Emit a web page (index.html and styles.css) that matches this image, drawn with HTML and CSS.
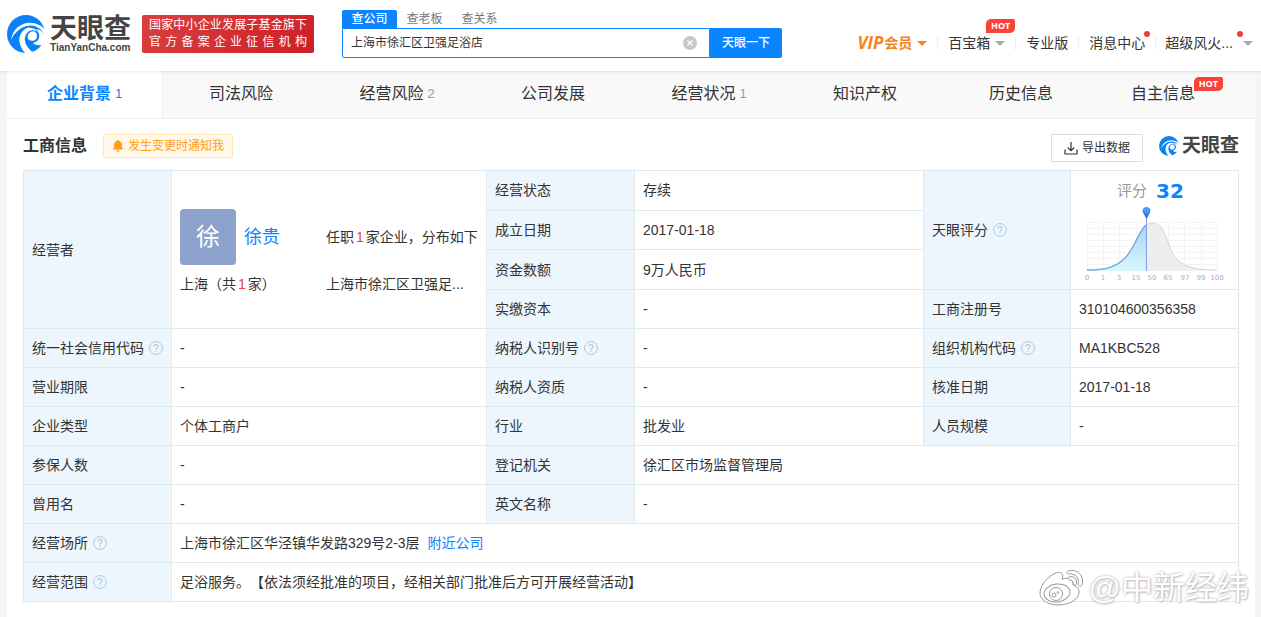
FILE: index.html
```html
<!DOCTYPE html>
<html lang="zh-CN">
<head>
<meta charset="utf-8">
<title>天眼查</title>
<link rel="stylesheet" href="styles.css">
</head>
<body>
<svg class="defs" aria-hidden="true">
  <symbol id="eye" viewBox="0 0 38 38">
    <circle cx="19" cy="19" r="19" fill="#0a82f5"/>
    <path d="M4 25C6 11 20 4 32 10C35 11 37 13 39 17V28C35 31 29 31 26 28C31 27 33 23 32 19C30 11 20 9 13 14C9 17 6 20 4 25z" fill="#fff"/>
    <path d="M20 13C10 18 10 30 19 39L27 38C19 33 15 24 20 18C22 15 27 14 30 17C28 12 24 11 20 13z" fill="#fff"/>
    <path d="M21 20C23 15 30 15 30 21C30 25 26 27 22 25C21 24 20 22 21 20z" fill="#fff"/>
    <path d="M14 14C22 8 32 10 37 19C34 15 31 14 28 14C23 12 18 12 14 14z" fill="#0a82f5"/>
  </symbol>
  <symbol id="help" viewBox="0 0 14 14">
    <circle cx="7" cy="7" r="6.4" fill="none" stroke="#a9c8e2"/>
    <path d="M5 5.6c0-2.6 4-2.6 4 0C9 7 7 7 7 8.7M7 9.8v1.1" fill="none" stroke="#a9c8e2" stroke-width="1.1"/>
  </symbol>
</svg>

<header class="topbar">
  <a class="logo" href="#">
    <svg class="logo-mark"><use href="#eye"/></svg>
    <span class="logo-words"><span class="logo-cn">天眼查</span><span class="logo-en">TianYanCha.com</span></span>
  </a>
  <div class="official"><span>国家中小企业发展子基金旗下</span><span class="spread">官方备案企业征信机构</span></div>
  <form class="search">
    <div class="search-tabs">
      <button type="button" class="search-tab on">查公司</button>
      <button type="button" class="search-tab">查老板</button>
      <button type="button" class="search-tab">查关系</button>
    </div>
    <div class="search-row">
      <div class="search-box">
        <input type="text" aria-label="搜索公司" value="上海市徐汇区卫强足浴店">
        <button type="button" class="clear" aria-label="清除"><svg viewBox="0 0 14 14"><circle cx="7" cy="7" r="7" fill="#c8c8c8"/><path d="M4.5 4.5l5 5m0-5l-5 5" stroke="#fff" stroke-width="1.2"/></svg></button>
      </div>
      <button type="submit" class="go">天眼一下</button>
    </div>
  </form>
  <nav class="user-nav">
    <a class="vip" href="#"><i>VIP</i>会员<span class="caret"></span></a>
    <a href="#">百宝箱<span class="caret"></span><b class="hot">HOT</b></a>
    <a href="#">专业版</a>
    <a href="#">消息中心<span class="dot"></span></a>
    <a class="account" href="#">超级风火...<span class="caret"></span><span class="dot"></span></a>
  </nav>
</header>

<main class="page">
  <nav class="tabs">
    <a class="active" href="#">企业背景<small>1</small></a>
    <a href="#">司法风险</a>
    <a href="#">经营风险<small>2</small></a>
    <a href="#">公司发展</a>
    <a href="#">经营状况<small>1</small></a>
    <a href="#">知识产权</a>
    <a href="#">历史信息</a>
    <a href="#"><span class="tab-label">自主信息<b class="hot">HOT</b></span></a>
  </nav>

  <section class="info">
    <div class="info-head">
      <h2>工商信息</h2>
      <button type="button" class="notify"><svg viewBox="0 0 12 12"><path d="M6 0c.7 0 1 .4 1 1 2 .5 3 2 3 4v2.500L11.500 9.500H.500L2 7.500V5c0-2 1-3.500 3-4 0-.6.300-1 1-1zM4.500 10.300h3c-.3 2-2.700 2-3 0z" fill="#ff9c1a"/></svg>发生变更时通知我</button>
      <button type="button" class="export"><svg viewBox="0 0 14 14" fill="none" stroke="#333" stroke-width="1.200"><path d="M7 1v8.500M3.800 6.500L7 9.700l3.200-3.200M1 8.500v4.500h12V8.500"/></svg>导出数据</button>
      <div class="brand"><svg><use href="#eye"/></svg>天眼查</div>
    </div>

    <table class="facts">
      <colgroup><col class="label-col"><col class="owner-col"><col class="label-col"><col><col class="label-col-narrow"><col class="score-col"></colgroup>
      <tr>
        <th rowspan="4">经营者</th>
        <td rowspan="4">
          <div class="owner">
            <div class="person"><span class="avatar">徐</span><a href="#">徐贵</a></div>
            <div>任职<em>1</em>家企业，分布如下</div>
            <div>上海（共<em>1</em>家）</div>
            <div>上海市徐汇区卫强足...</div>
          </div>
        </td>
        <th>经营状态</th><td>存续</td>
        <th rowspan="3">天眼评分<svg class="help"><use href="#help"/></svg></th>
        <td rowspan="3" class="score-cell">
          <div class="score">评分<strong>32</strong></div>
          <svg class="chart" viewBox="0 0 146 76" role="img" aria-label="评分分布">
            <defs>
              <linearGradient id="fill" x1="0" y1="0" x2="0" y2="1"><stop offset="0" stop-color="#a5d5fb"/><stop offset="1" stop-color="#d9f6fc"/></linearGradient>
              <linearGradient id="pin" x1="0" y1="0" x2="0" y2="1"><stop offset="0" stop-color="#2f9df5"/><stop offset="1" stop-color="#3a62e8"/></linearGradient>
            </defs>
            <path d="M8 16.500H138M8 22.500H138M8 28.500H138M8 34.500H138M8 40.500H138M8 46.500H138M8 52.500H138M8 58.500H138M8 64.500H138M8.500 16V65M24.500 16V65M40.500 16V65M57.500 16V65M73.500 16V65M89.500 16V65M105.500 16V65M122.500 16V65M138.500 16V65" stroke="#f4f4f6" fill="none"/>
            <path d="M67 20C69 17.500 71 17 74 17C87 17 88 41 96 51C103 60 114 64 138 64L67 65z" fill="#eee"/>
            <path d="M67 20C69 17.500 71 17 74 17C87 17 88 41 96 51C103 60 114 64 138 64" fill="none" stroke="#d6d6d6"/>
            <path d="M8 64C28 64 37 61 46 52C56 42 60 24 67 19V65H8z" fill="url(#fill)"/>
            <path d="M8 64C28 64 37 61 46 52C56 42 60 24 67 19" fill="none" stroke="#6ea3e4" stroke-width="1.300"/>
            <path d="M67.500 10V65" stroke="#7da2e8"/>
            <path d="M67.500 13L64 6.500C61.500-1 73.500-1 71 6.500z" fill="url(#pin)"/>
            <circle cx="67.500" cy="4.800" r="1.700" fill="none" stroke="#8ccbff" stroke-width=".7"/>
            <g class="axis"><text x="8" y="74">0</text><text x="24" y="74">1</text><text x="40" y="74">3</text><text x="57" y="74">15</text><text x="73" y="74">50</text><text x="89" y="74">65</text><text x="106" y="74">97</text><text x="122" y="74">99</text><text x="138" y="74">100</text></g>
          </svg>
        </td>
      </tr>
      <tr><th>成立日期</th><td>2017-01-18</td></tr>
      <tr><th>资金数额</th><td>9万人民币</td></tr>
      <tr><th>实缴资本</th><td>-</td><th>工商注册号</th><td>310104600356358</td></tr>
      <tr><th>统一社会信用代码<svg class="help"><use href="#help"/></svg></th><td>-</td><th>纳税人识别号<svg class="help"><use href="#help"/></svg></th><td>-</td><th>组织机构代码<svg class="help"><use href="#help"/></svg></th><td>MA1KBC528</td></tr>
      <tr><th>营业期限</th><td>-</td><th>纳税人资质</th><td>-</td><th>核准日期</th><td>2017-01-18</td></tr>
      <tr><th>企业类型</th><td>个体工商户</td><th>行业</th><td>批发业</td><th>人员规模</th><td>-</td></tr>
      <tr><th>参保人数</th><td>-</td><th>登记机关</th><td colspan="3">徐汇区市场监督管理局</td></tr>
      <tr><th>曾用名</th><td>-</td><th>英文名称</th><td colspan="3">-</td></tr>
      <tr><th>经营场所<svg class="help"><use href="#help"/></svg></th><td colspan="5">上海市徐汇区华泾镇华发路329号2-3层<a class="nearby" href="#">附近公司</a></td></tr>
      <tr><th>经营范围<svg class="help"><use href="#help"/></svg></th><td colspan="5">足浴服务。【依法须经批准的项目，经相关部门批准后方可开展经营活动】</td></tr>
    </table>
    <div class="watermark">
      <svg viewBox="0 0 46 38" fill="#fff" stroke="#999" stroke-width="1"><path d="M23 10c2-5-1-8-6-6C9 7 1 16 1 24c0 7 8 12 18 12 12 0 21-6 21-13 0-4-3-6-6-7 1-5-3-8-11-6z"/><ellipse cx="18" cy="24" rx="13" ry="9" transform="rotate(-7 18 24)"/><circle cx="17" cy="25" r="6.500"/><circle cx="15" cy="26" r="2"/><circle cx="19" cy="23.500" r=".8"/><path d="M29 2c9-3 17 5 14 14-1 2-4 1-4-1 2-6-3-11-9-10-2 0-3-2-1-3zM30 8c5-2 9 3 7 7-1 2-3 1-3-1 0-2-1-3-3-3s-3-2-1-3z"/></svg>
      <span>@中新经纬</span>
    </div>
  </section>
</main>
</body>
</html>
```
FILE: styles.css
```css
* { box-sizing: border-box; }
body {
  margin: 0;
  background: #f4f5f6;
  color: #333;
  font: 14px/20px "Liberation Sans", "Noto Sans CJK SC", sans-serif;
  text-spacing-trim: space-all;
}
a { color: inherit; text-decoration: none; }
button, input { font: inherit; color: inherit; border: 0; padding: 0; background: none; }
svg { display: block; }
.defs { position: absolute; width: 0; height: 0; }

.topbar {
  position: relative;
  display: flex;
  align-items: center;
  height: 71px;
  padding: 0 8px 3px 7px;
  background: #fff;
  box-shadow: 0 1px 3px rgba(0, 0, 0, .1);
}
.logo { display: flex; align-items: center; gap: 5px; width: 135px; color: #444; font-weight: 700; }
.logo-mark { width: 38px; height: 38px; }
.logo-words { display: flex; flex-direction: column; }
.logo-cn { font-size: 27px; line-height: 28px; }
.logo-en { font-size: 10px; line-height: 10px; }
.official {
  width: 172px;
  padding: 2px 7px;
  border-radius: 2px;
  background: linear-gradient(135deg, #da4040, #cd1f25);
  color: #fff;
  line-height: 17px;
  white-space: nowrap;
}
.official span { display: block; font-size: 12px; text-align-last: justify; }

.search { width: 440px; margin-left: 28px; font-size: 12px; }
.search-tabs { display: flex; }
.search-tab { width: 55px; height: 18px; line-height: 18px; color: #777; }
.search-tab.on { border-radius: 2px 2px 0 0; background: #0a84ff; color: #fff; font-weight: 500; }
.search-row { display: flex; height: 30px; }
.search-box { flex: 1; display: flex; align-items: center; padding: 0 12px 0 8px; border: 1px solid #0a84ff; border-radius: 0 0 0 2px; }
.search-box input { flex: 1; outline: 0; min-width: 0; }
.clear, .clear svg { width: 14px; height: 14px; }
.go { width: 72px; border-radius: 0 2px 2px 0; background: #0a84ff; color: #fff; font-weight: 500; }

.user-nav { display: flex; margin-left: auto; padding-top: 18px; white-space: nowrap; }
.user-nav a { position: relative; display: flex; align-items: center; padding: 0 10px 0 11px; }
.user-nav a + a::before { content: ""; position: absolute; left: 0; width: 1px; height: 14px; background: #eee; }
.user-nav .account { padding: 0 0 0 10px; }
.user-nav .vip { color: #f58220; font-weight: 700; }
.vip i { margin-right: 1px; font-family: "Open Sans", sans-serif; font-size: 17px; }
.caret { margin-left: 5px; border: 5px solid transparent; border-top-color: #aaa; border-bottom: 0; }
.vip .caret { border-top-color: #f58220; }
.account .caret { margin-left: 10px; }
.dot { position: absolute; top: -2px; right: 5px; width: 6px; height: 6px; border-radius: 3px; background: #f33b36; }
.account .dot { right: 10px; }
.hot {
  position: absolute;
  top: -14px;
  right: 0;
  padding: 0 5px;
  border-radius: 5px 2px 5px 0;
  background: #fa4238;
  color: #fff;
  font: 700 9px/14px "Open Sans", sans-serif;
}

.page { margin: 0 6px 0 7px; background: #fff; }
.tabs { display: grid; grid-template-columns: repeat(8, 1fr); border-bottom: 1px solid #eee; background: #f9f9f9; font-size: 16px; }
.tabs a { display: flex; align-items: center; justify-content: center; gap: 4px; height: 47px; padding-bottom: 2px; }
.tabs small { color: #999; font-size: 13px; }
.tabs .active { border-right: 1px solid #eee; background: #fff; color: #0a84ff; font-weight: 700; }
.tabs .active small { color: #0a84ff; font-weight: 400; }
.tab-label { position: relative; padding-right: 28px; }
.tab-label .hot { top: -7px; right: 0; }

.info { position: relative; padding: 15px 16px; }
.info-head { display: flex; height: 36px; align-items: flex-start; }
h2 { margin: 0 16px 0 0; font-size: 16px; line-height: 24px; }
.notify, .export { display: flex; align-items: center; justify-content: center; border: 1px solid #ffe6b8; border-radius: 2px; font-size: 12px; }
.notify { gap: 4px; width: 130px; height: 24px; background: #fff8e8; color: #ff9c1a; }
.notify svg { width: 12px; height: 12px; }
.export { gap: 4px; width: 92px; height: 28px; margin-left: auto; border-color: #ddd; }
.export svg { width: 14px; height: 14px; }
.brand { display: flex; align-items: center; gap: 3px; height: 24px; margin-left: 16px; color: #444; font-size: 19px; font-weight: 700; }
.brand svg { width: 20px; height: 20px; }

.facts { width: 100%; table-layout: fixed; border-collapse: collapse; }
.label-col { width: 148px; }
.label-col-narrow { width: 147px; }
.owner-col { width: 315px; }
.score-col { width: 168px; }
th, td { height: 39px; padding: 0 8px; border: 1px solid #dfe9f0; text-align: left; font-weight: 400; white-space: nowrap; }
th { background: #eef6fd; }
.help { display: inline-block; width: 14px; height: 14px; margin-left: 5px; vertical-align: -2px; }
.owner { display: grid; grid-template-columns: 146px 1fr; align-items: center; row-gap: 9px; padding-top: 3px; }
.person { display: flex; align-items: center; gap: 8px; color: #0a84ff; font-size: 18px; }
.avatar { width: 56px; height: 56px; border-radius: 4px; background: #8ca2cd; color: #fff; font-size: 24px; line-height: 56px; text-align: center; }
em { margin: 0 2px; color: #f33b46; font-style: normal; }
.score-cell { height: 119px; padding: 4px 8px 7px; }
.score { display: flex; justify-content: center; align-items: center; gap: 9px; height: 31px; padding-right: 8px; color: #999; font-size: 15px; }
.score strong { color: #0a84ff; font: 700 20px/24px "DejaVu Sans", sans-serif; }
.chart { width: 146px; height: 76px; }
.axis { fill: #99aee0; font: 7px "DejaVu Sans", sans-serif; text-anchor: middle; }
.nearby { margin-left: 8px; color: #0a84ff; }

.watermark { position: absolute; right: 6px; bottom: 10px; display: flex; align-items: center; gap: 4px; color: #fff; font-size: 32px; line-height: 38px; text-shadow: 0 0 3px #aaa, 1px 1px 2px #ccc; }
.watermark svg { width: 46px; height: 38px; }
```
